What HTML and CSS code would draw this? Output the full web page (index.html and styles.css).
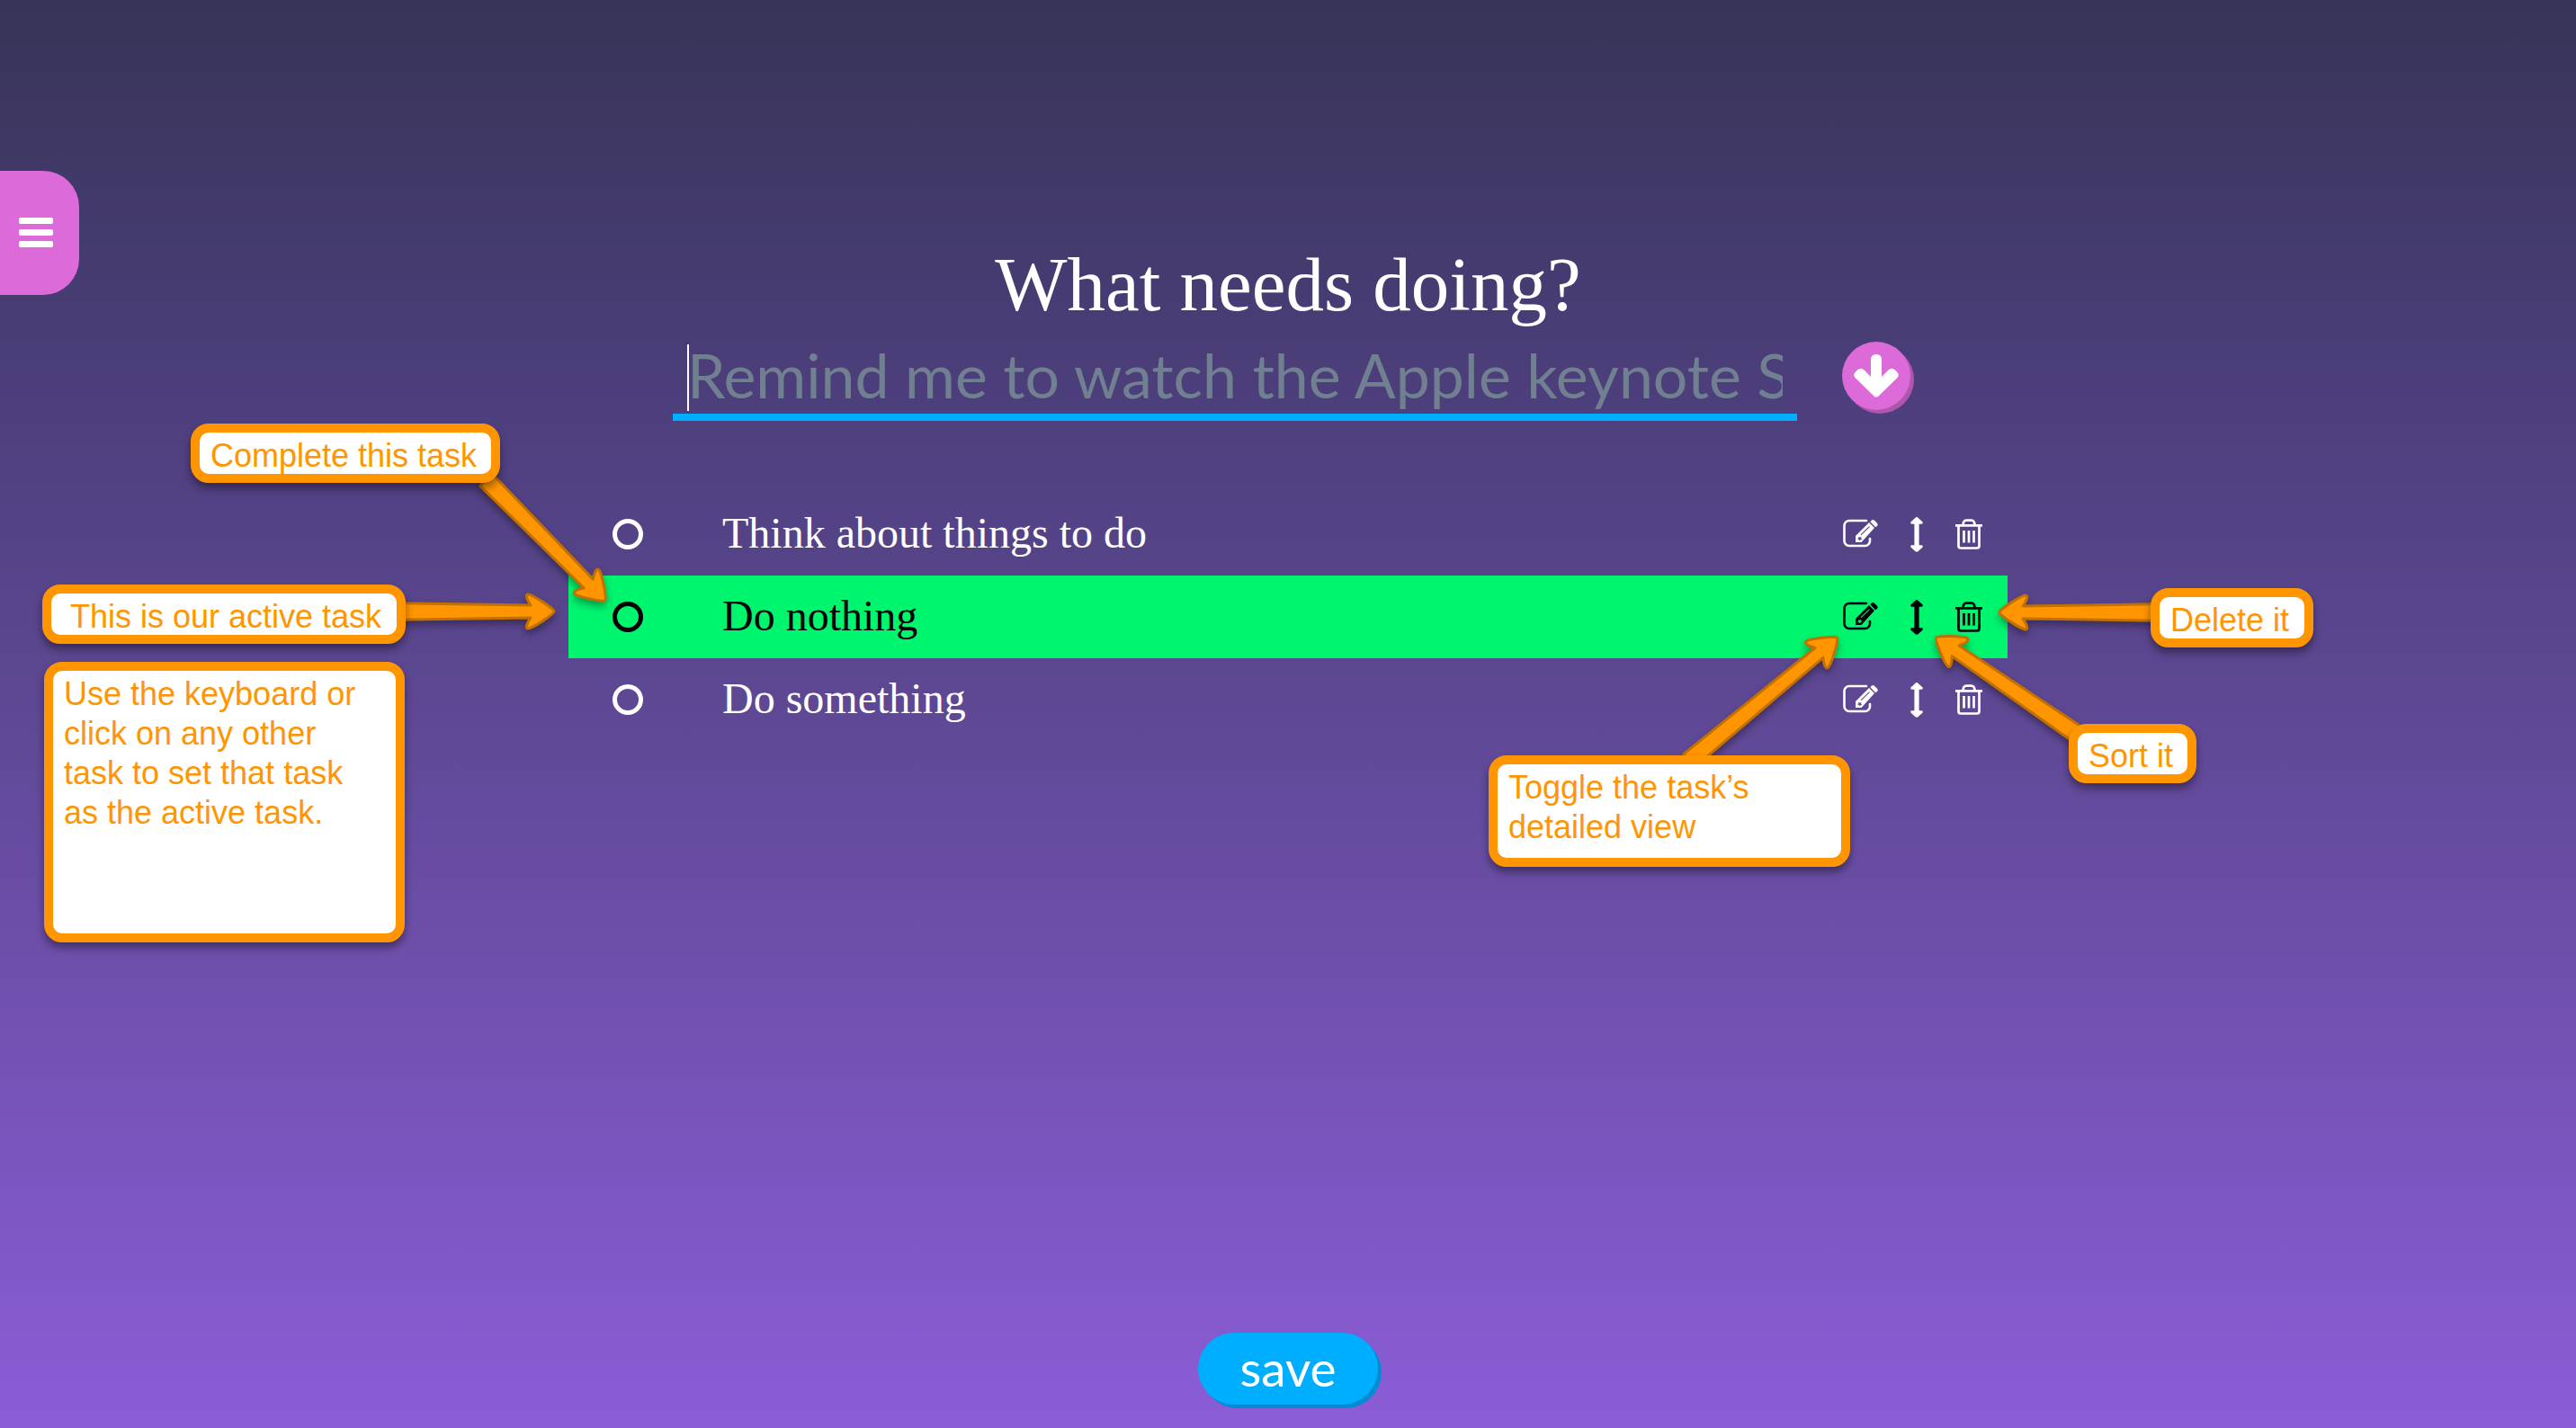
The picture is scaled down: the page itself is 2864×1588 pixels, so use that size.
FILE: index.html
```html
<!DOCTYPE html>
<html lang="en">
<head>
<meta charset="utf-8">
<meta name="viewport" content="width=device-width, initial-scale=1">
<title>What needs doing?</title>
<link rel="stylesheet" href="styles.css">
</head>
<body>
<svg class="sprite" aria-hidden="true">
  <symbol id="edit" viewBox="0 0 42 36">
    <path d="M27 3H8a5.500 5.500 0 0 0-5.500 5.500V25.500a5.500 5.500 0 0 0 5.500 5.500H25.500a5.500 5.500 0 0 0 5.500-5.500V23" fill="none" stroke="currentColor" stroke-width="2.600" stroke-linecap="round"/>
    <path fill="currentColor" fill-rule="evenodd" d="M15 20 30 5l6 6L21.500 27H15ZM20.500 18.500l.8.800L30.800 10l-.8-.8ZM17 23.500l1.300-1v-1.500l1.700.6 1.500-.4-.3 1.600.8 1.300-1.700.1-1.200 1-.6-1.400Z"/>
    <path fill="currentColor" d="M31.300 4.200 33 2.500q1.500-1 3 .3l3 3q1.300 1.500.2 3l-2 1.500Z"/>
  </symbol>
  <symbol id="sort" viewBox="0 0 14 39">
    <path fill="currentColor" d="M7 0Q8 .2 8.700 1L13.600 5.600Q14.200 7.600 12.500 7.700H9.600V31.300H12.500Q14.200 31.400 13.600 33.400L8.700 38Q7 39.500 5.300 38L.4 33.400Q-.2 31.400 1.500 31.300H4.400V7.700H1.500Q-.2 7.600.4 5.600L5.300 1Q6 .2 7 0Z"/>
  </symbol>
  <symbol id="trash" viewBox="0 0 34 36">
    <g fill="none" stroke="currentColor" stroke-width="2.700">
      <path d="M2 8.300H32M10.200 8 11.200 4.500Q12 2.700 14 2.700H20Q22 2.700 22.800 4.500L23.800 8M5.500 8.500V31Q5.500 33.500 8 33.500H26Q28.500 33.500 28.500 31V8.500"/>
      <path d="M11.500 14V27.500M17 14V27.500M22.500 14V27.500"/>
    </g>
  </symbol>
</svg>

<button class="menu" type="button" aria-label="Menu">
  <svg width="40" height="34" viewBox="0 0 40 34" aria-hidden="true"><g fill="currentColor"><rect x="1" y="0" width="38" height="7" rx="2"/><rect x="1" y="13" width="38" height="7" rx="2"/><rect x="1" y="26" width="38" height="7" rx="2"/></g></svg>
</button>

<main class="page">
  <h1 class="title"><label for="task">What needs doing?</label></h1>
  <form class="entry">
    <div class="field"><input id="task" class="task-input" type="text" placeholder="Remind me to watch the Apple keynote September"></div>
    <button class="add" type="submit" aria-label="Add task">
      <svg width="50" height="50" viewBox="0 0 50 50" aria-hidden="true"><path fill="currentColor" d="M19 7Q19 1 25 1T31 7V26L38.500 18.500Q42 15 46 18.500L48.500 21Q51 24 48.500 27L27 48Q25 49.600 23 48L1.500 27Q-1 24 1.500 21L4 18.500Q8 15 11.500 18.500L19 26Z"/></svg>
    </button>
  </form>

  <section class="board">
    <ul class="tasks">
      <li class="task">
        <input id="t1" class="tick" type="checkbox"><label class="name" for="t1">Think about things to do</label>
        <button class="tool" type="button" aria-label="Details"><svg width="42" height="36"><use href="#edit"/></svg></button>
        <button class="tool" type="button" aria-label="Sort"><svg width="14" height="39"><use href="#sort"/></svg></button>
        <button class="tool" type="button" aria-label="Delete"><svg width="34" height="36"><use href="#trash"/></svg></button>
      </li>
      <li class="task active">
        <input id="t2" class="tick" type="checkbox"><label class="name" for="t2">Do nothing</label>
        <button class="tool" type="button" aria-label="Details"><svg width="42" height="36"><use href="#edit"/></svg></button>
        <button class="tool" type="button" aria-label="Sort"><svg width="14" height="39"><use href="#sort"/></svg></button>
        <button class="tool" type="button" aria-label="Delete"><svg width="34" height="36"><use href="#trash"/></svg></button>
      </li>
      <li class="task">
        <input id="t3" class="tick" type="checkbox"><label class="name" for="t3">Do something</label>
        <button class="tool" type="button" aria-label="Details"><svg width="42" height="36"><use href="#edit"/></svg></button>
        <button class="tool" type="button" aria-label="Sort"><svg width="14" height="39"><use href="#sort"/></svg></button>
        <button class="tool" type="button" aria-label="Delete"><svg width="34" height="36"><use href="#trash"/></svg></button>
      </li>
    </ul>

    <svg class="arrows" aria-hidden="true">
      <defs>
        <path id="arrow" d="M-2 0C-2-3-26-19-31-19C-35-19-31-11-28-7L-190-9.500V9.500L-28 7C-31 11-35 19-31 19C-26 19-2 3-2 0Z"/>
        <path id="arrow-long" d="M-2 0C-2-3-26-19-31-19C-35-19-31-11-28-7L-216-9.500V9.500L-28 7C-31 11-35 19-31 19C-26 19-2 3-2 0Z"/>
      </defs>
      <g class="arrow"><use href="#arrow" transform="translate(42 121) rotate(45.400)"/></g>
      <g class="arrow"><use href="#arrow" transform="translate(-14 132)"/></g>
      <g class="arrow"><use href="#arrow" transform="translate(1589 133) rotate(180)"/></g>
      <g class="arrow"><use href="#arrow" transform="translate(1519 160) rotate(214.400)"/></g>
      <g class="arrow"><use href="#arrow-long" transform="translate(1412 160) rotate(-39.700)"/></g>
    </svg>
    <p class="note complete">Complete this task</p>
    <p class="note current">This is our active task</p>
    <p class="note keyboard">Use the keyboard or click on any other task to set that task as the active task.</p>
    <p class="note toggle">Toggle the task’s detailed view</p>
    <p class="note delete">Delete it</p>
    <p class="note sort">Sort it</p>
  </section>

  <footer class="actions"><button class="save" type="button">save</button></footer>
</main>
</body>
</html>
```

FILE: styles.css
```css
* { box-sizing: border-box; }

body {
  margin: 0;
  overflow-x: hidden;
  color: #fff;
  background: linear-gradient(#373457, #4f4080 31%, #5c4791 47%, #8b5dd7) no-repeat;
  font-family: "Liberation Serif", serif;
}

button {
  padding: 0;
  border: 0;
  color: inherit;
  background: none;
  cursor: pointer;
}

svg { display: block; }

.sprite {
  position: absolute;
  width: 0;
  height: 0;
}

.page {
  display: flex;
  flex-direction: column;
  align-items: center;
  min-height: 100vh;
  padding: 268px 0 26px;
}

.menu {
  position: absolute;
  top: 190px;
  left: 0;
  width: 88px;
  height: 138px;
  padding-left: 20px;
  border-radius: 0 40px 40px 0;
  background: #dc6bd9;
}

.title {
  margin: 0 0 12px;
  font-size: 85px;
  font-weight: 400;
  line-height: 96px;
}

.entry {
  display: flex;
  align-items: center;
  gap: 50px;
  width: 100%;
  max-width: 1384px;
  padding-left: 8px;
}

.field {
  position: relative;
  flex: 1;
}

/* text cursor at the start of the empty field */
.field::before {
  content: "";
  position: absolute;
  top: 7px;
  left: 16px;
  width: 2px;
  height: 74px;
  background: #fff;
}

.task-input {
  display: block;
  width: 100%;
  height: 92px;
  padding: 0 16px 4px;
  border: 0;
  border-bottom: 8px solid #00aeff;
  outline: 0;
  color: #fff;
  background: none;
  font-family: Lato, sans-serif;
  font-size: 68px;
  line-height: 80px;
}

.task-input::placeholder { color: #708090; opacity: 1; }

.add {
  display: grid;
  place-items: center;
  width: 76px;
  height: 76px;
  margin-bottom: 8px;
  border-radius: 50%;
  background: #dc6bd9;
  box-shadow: 4px 4px #b056ae;
}

.board {
  position: relative;
  width: 100%;
  max-width: 1600px;
  margin: 80px 0;
}

.tasks {
  margin: 0;
  padding: 0;
  list-style: none;
}

.task {
  display: flex;
  align-items: center;
  gap: 34px;
  height: 92px;
  padding: 0 26px 0 49px;
}

.task.active {
  color: #000;
  background: #00f56f;
}

.tick {
  appearance: none;
  width: 34px;
  height: 34px;
  margin: 0;
  border: 5px solid currentColor;
  border-radius: 50%;
  color: inherit;
}

.name {
  flex: 1;
  padding: 0 0 2px 54px;
  font-size: 48px;
  line-height: 56px;
}

.arrows {
  position: absolute;
  inset: 0;
  width: 100%;
  height: 100%;
  overflow: visible;
  pointer-events: none;
}

.arrow {
  fill: #ff9500;
  stroke: #c27100;
  stroke-width: 3px;
  stroke-linejoin: round;
  filter: drop-shadow(0 5px 4px rgba(0, 0, 0, 0.35));
}

.note {
  position: absolute;
  height: 66px;
  margin: 0;
  padding: 4px 12px 0;
  border: 10px solid #ff9500;
  border-radius: 20px;
  color: #ff9500;
  background: #fff;
  box-shadow: 0 6px 10px rgba(0, 0, 0, 0.4);
  font-family: "Liberation Sans", sans-serif;
  font-size: 36px;
  line-height: 44px;
}

.complete { top: -77px; left: -420px; width: 344px; }
.current { top: 102px; left: -585px; width: 404px; padding-left: 21px; }
.keyboard { top: 188px; left: -583px; width: 401px; height: 312px; padding-right: 32px; }
.toggle { top: 292px; left: 1023px; width: 402px; height: 124px; padding-right: 70px; }
.delete { top: 106px; left: 1759px; width: 181px; }
.sort { top: 257px; left: 1668px; width: 142px; }

.actions { margin-top: auto; }

.save {
  width: 200px;
  height: 80px;
  padding-bottom: 2px;
  border-radius: 40px;
  background: #00aeff;
  box-shadow: 4px 4px #008bd2;
  font-family: Lato, sans-serif;
  font-size: 55px;
  line-height: 64px;
}
```
